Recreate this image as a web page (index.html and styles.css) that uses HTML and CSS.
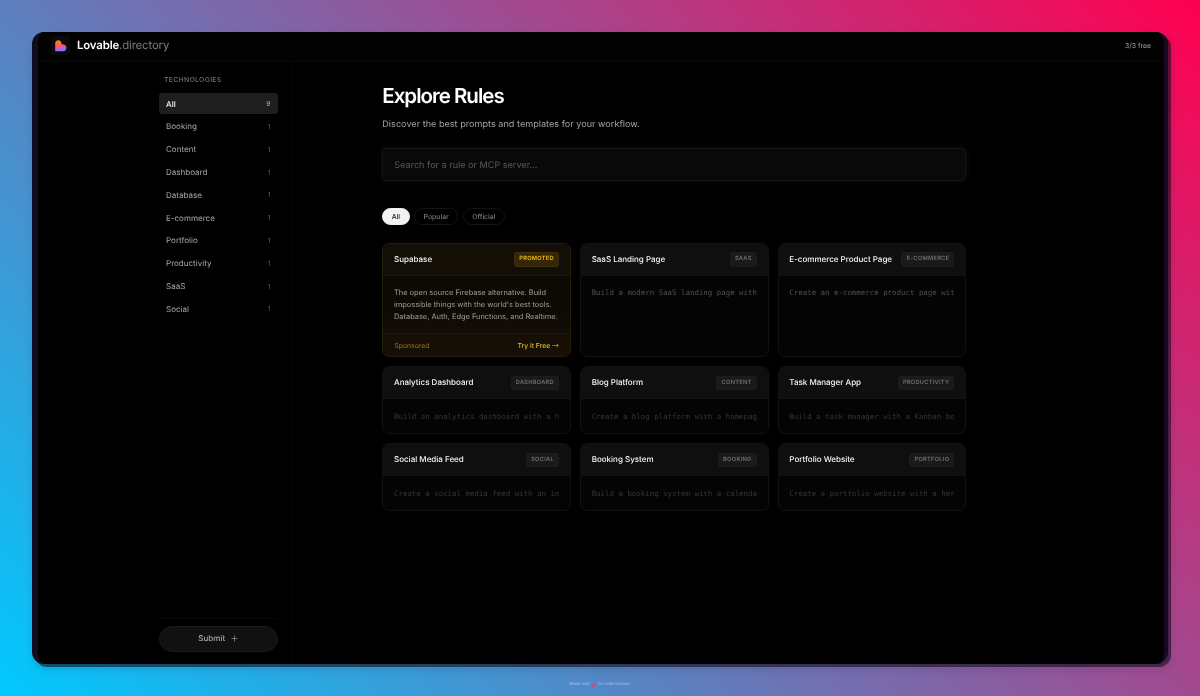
FILE: index.html
```html
<!DOCTYPE html>
<html lang="en">
<head>
<meta charset="utf-8">
<title>Lovable.directory</title>
<link rel="stylesheet" href="styles.css">
</head>
<body>
<div class="window">
  <header class="topbar">
    <div class="brand">
      <span class="logo"><svg viewBox="0 0 12 12" width="12" height="12"><defs><linearGradient id="heart" x1="0.35" y1="0" x2="0.6" y2="1"><stop offset="0" stop-color="#ff7a18"/><stop offset="0.3" stop-color="#ff6a2a"/><stop offset="0.6" stop-color="#f252a0"/><stop offset="0.85" stop-color="#8a6cff"/><stop offset="1" stop-color="#6b7bff"/></linearGradient></defs><path d="M0.2 3.1A3.1 3.1 0 0 1 6.3 2.6L6.7 4.2L8.6 4.6A3.4 3.4 0 0 1 8.4 11.3H0.2Z" fill="url(#heart)"/></svg></span>
      <span class="brand-name"><b>Lovable</b>.directory</span>
    </div>
    <span class="quota">3/3 free</span>
  </header>
  <div class="body">
    <aside class="sidebar">
      <h2 class="side-title">TECHNOLOGIES</h2>
      <nav class="side-nav">
        <a class="side-item active"><span>All</span><i>9</i></a>
        <a class="side-item"><span>Booking</span><i>1</i></a>
        <a class="side-item"><span>Content</span><i>1</i></a>
        <a class="side-item"><span>Dashboard</span><i>1</i></a>
        <a class="side-item"><span>Database</span><i>1</i></a>
        <a class="side-item"><span>E-commerce</span><i>1</i></a>
        <a class="side-item"><span>Portfolio</span><i>1</i></a>
        <a class="side-item"><span>Productivity</span><i>1</i></a>
        <a class="side-item"><span>SaaS</span><i>1</i></a>
        <a class="side-item"><span>Social</span><i>1</i></a>
      </nav>
      <div class="side-foot">
        <button class="submit"><span>Submit</span><svg viewBox="0 0 7 7" width="7" height="7"><path d="M3.5 .5V6.5M.5 3.5H6.5" stroke="#8c8c92" stroke-width=".75"/></svg></button>
      </div>
    </aside>
    <main class="main">
      <h1 class="title">Explore Rules</h1>
      <p class="subtitle">Discover the best prompts and templates for your workflow.</p>
      <div class="search"><span>Search for a rule or MCP server...</span></div>
      <div class="filters">
        <span class="pill on">All</span><span class="pill">Popular</span><span class="pill">Official</span>
      </div>
      <div class="cards">
        <article class="card promo">
          <div class="card-head"><h3>Supabase</h3><span class="tag">PROMOTED</span></div>
          <p class="promo-text">The open source Firebase alternative. Build<br>impossible things with the world's best tools.<br>Database, Auth, Edge Functions, and Realtime.</p>
          <div class="promo-foot"><span>Sponsored</span><b>Try it Free <span class="arrow">→</span></b></div>
        </article>
        <article class="card bright">
          <div class="card-head"><h3>SaaS Landing Page</h3><span class="tag">SAAS</span></div>
          <p class="code">Build a modern SaaS landing page with</p>
        </article>
        <article class="card bright">
          <div class="card-head"><h3>E-commerce Product Page</h3><span class="tag">E-COMMERCE</span></div>
          <p class="code">Create an e-commerce product page wit</p>
        </article>
        <article class="card">
          <div class="card-head"><h3>Analytics Dashboard</h3><span class="tag">DASHBOARD</span></div>
          <p class="code">Build an analytics dashboard with a h</p>
        </article>
        <article class="card">
          <div class="card-head"><h3>Blog Platform</h3><span class="tag">CONTENT</span></div>
          <p class="code">Create a blog platform with a homepag</p>
        </article>
        <article class="card">
          <div class="card-head"><h3>Task Manager App</h3><span class="tag">PRODUCTIVITY</span></div>
          <p class="code">Build a task manager with a Kanban bo</p>
        </article>
        <article class="card">
          <div class="card-head"><h3>Social Media Feed</h3><span class="tag">SOCIAL</span></div>
          <p class="code">Create a social media feed with an in</p>
        </article>
        <article class="card">
          <div class="card-head"><h3>Booking System</h3><span class="tag">BOOKING</span></div>
          <p class="code">Build a booking system with a calenda</p>
        </article>
        <article class="card">
          <div class="card-head"><h3>Portfolio Website</h3><span class="tag">PORTFOLIO</span></div>
          <p class="code">Create a portfolio website with a her</p>
        </article>
      </div>
    </main>
  </div>
</div>
<footer class="credit">Made with <svg viewBox="0 0 6 6" width="5" height="5"><path d="M3 5.6C-1.6 2.4.8-.6 3 1.3C5.2-.6 7.6 2.4 3 5.6Z" fill="#b5578c"/></svg> for indie hackers</footer>
</body>
</html>
```

FILE: styles.css
```css
* { box-sizing: border-box; margin: 0; padding: 0; }
body {
  width: 1200px; height: 696px; overflow: hidden; padding: 32px 32px 0;
  background: linear-gradient(45deg, #00c9ff, #ff0050);
  font-family: Inter, "Liberation Sans", sans-serif;
  text-rendering: geometricPrecision;
  -webkit-font-smoothing: antialiased;
}
.window {
  width: 1136px; height: 632px; border-radius: 12px; overflow: hidden;
  border-left: 6px solid #110d20; border-right: 4px solid #180824;
  background: #000; will-change: transform;
  box-shadow: 3px 3px 0 rgba(20, 15, 35, .6), 2px 5px 10px rgba(0, 0, 0, .14);
  display: flex; flex-direction: column;
}
.topbar {
  height: 30px; flex: none; display: flex; align-items: center; justify-content: space-between;
  padding: 0 13px 2px 13px; border-bottom: 1px solid #090909; background: #020202;
}
.brand { display: flex; align-items: center; gap: 7px; }
.logo { width: 19px; height: 19px; background: #0a0a0b; border-radius: 3px; display: flex; align-items: center; justify-content: center; }
.brand-name { font-size: 11.4px; letter-spacing: -.15px; color: #7d7d83; padding-bottom: 1px; }
.brand-name b { font-weight: 600; color: #fff; }
.quota { font-size: 6.9px; color: #a5a5ab; }
.body { display: flex; flex: 1; min-height: 0; }
.sidebar {
  width: 255px; flex: none; border-right: 1px solid #080808;
  padding: 14px 14.5px 12.4px 121px; display: flex; flex-direction: column;
}
.side-title { font-size: 6.85px; line-height: 8px; font-weight: 500; letter-spacing: .33px; color: #75757a; padding-left: 5px; }
.side-nav { margin-top: 9.4px; display: flex; flex-direction: column; gap: 2.3px; }
.side-item {
  height: 20.5px; padding: 0 7px; border-radius: 3.5px; display: flex; align-items: center;
  justify-content: space-between; font-size: 8px; letter-spacing: .02px; color: #a8a8af;
}
.side-item i { font-style: normal; font-size: 6.85px; color: #5c5c62; }
.side-item.active { background: #1e1e1e; color: #fafafa; font-weight: 500; }
.side-item.active i { color: #b0b0b5; font-weight: 400; }
.side-foot { margin-top: auto; border-top: 1px solid #090909; padding-top: 7px; }
.submit {
  width: 119px; height: 26px; border-radius: 13px; border: 1px solid #1a1a1a; background: #111;
  color: #aaaab1; font: 500 8px Inter, sans-serif; text-rendering: inherit;
  display: flex; align-items: center; justify-content: center; gap: 5.5px;
}
.submit span { margin: 0 0 1px -1px; }
.main { padding: 21px 0 0 89.3px; width: 673.3px; }
.title { font-size: 20.5px; line-height: 26px; font-weight: 600; letter-spacing: -1px; color: #fff; }
.subtitle { margin-top: 10px; font-size: 9.1px; line-height: 12px; letter-spacing: .012px; color: #a1a1a8; }
.search {
  margin-top: 17px; height: 33px; border: 1px solid #151515; border-radius: 4px; background: #090909;
  padding: 0 11px; display: flex; align-items: center; font-size: 9.1px; color: #58585e;
  box-shadow: 0 0 7px rgba(255, 255, 255, .06);
}
.search span { padding-top: 2px; }
.filters { margin-top: 27px; display: flex; gap: 4.5px; }
.pill {
  height: 17px; border-radius: 9px; border: 1px solid #141414; padding: 0 8.5px;
  font-size: 6.85px; line-height: 15px; font-weight: 500; color: #78787e;
}
.pill.on { background: #f2f2f2; border-color: #f2f2f2; color: #1a1a1a; }
.cards {
  margin-top: 18px; display: grid; grid-template-columns: repeat(3, 1fr); column-gap: 9px; row-gap: 9px;
  grid-template-rows: 114.4px 68px 68px;
}
.card { min-width: 0; border: 1px solid #121212; border-radius: 7px; background: #040404; overflow: hidden; display: flex; flex-direction: column; }
.card-head {
  height: 32px; flex: none; background: #0f0f0f; border-bottom: 1px solid #121212;
  display: flex; align-items: center; justify-content: space-between; padding: 0 11px;
}
.card-head h3 { font-size: 8px; font-weight: 500; color: #f6f6f7; white-space: nowrap; padding-bottom: 1px; margin-left: -.3px; }
.tag {
  height: 14.5px; line-height: 12.5px; border: 1px solid #1c1c1e; border-radius: 2.5px; background: #1a1a1b;
  padding: 0 4px 0 4.2px; font-size: 5.7px; font-weight: 600; letter-spacing: .27px; color: #6e6e75;
}
.code {
  margin: 11.3px 11px 0 10.7px; font-family: "DejaVu Sans Mono", monospace; font-size: 7.43px; line-height: 11px;
  color: #353538; white-space: nowrap; overflow: hidden;
}
.bright .code { color: #505054; }
.promo { border-color: #261c0a; background: linear-gradient(#0c0904, #0d0a04 60%, #1a1007); }
.promo .card-head { background: #130e06; border-bottom-color: #1d1509; }
.promo .tag { background: #35260a; border-color: #3f2e0a; color: #f2bd12; }
.promo-text { padding: 11px 11px 0 10.7px; font-size: 7.43px; line-height: 12px; color: #a39e99; white-space: nowrap; }
.promo-foot {
  margin-top: auto; height: 23.5px; border-top: 1px solid #1f1609; background: #160f05; padding: 1px 11px 0;
  display: flex; align-items: center; justify-content: space-between; font-size: 6.85px; color: #a07417;
}
.promo-foot b { font-weight: 500; color: #ecbf1e; }
.arrow { font-family: "Noto Sans CJK SC", "DejaVu Sans", sans-serif; font-weight: 400; line-height: 1; }
.credit {
  margin-top: 17px; display: flex; justify-content: center; align-items: center; gap: 1.5px;
  font-size: 4.15px; line-height: 8px; color: rgba(225, 225, 250, .65);
}
```
